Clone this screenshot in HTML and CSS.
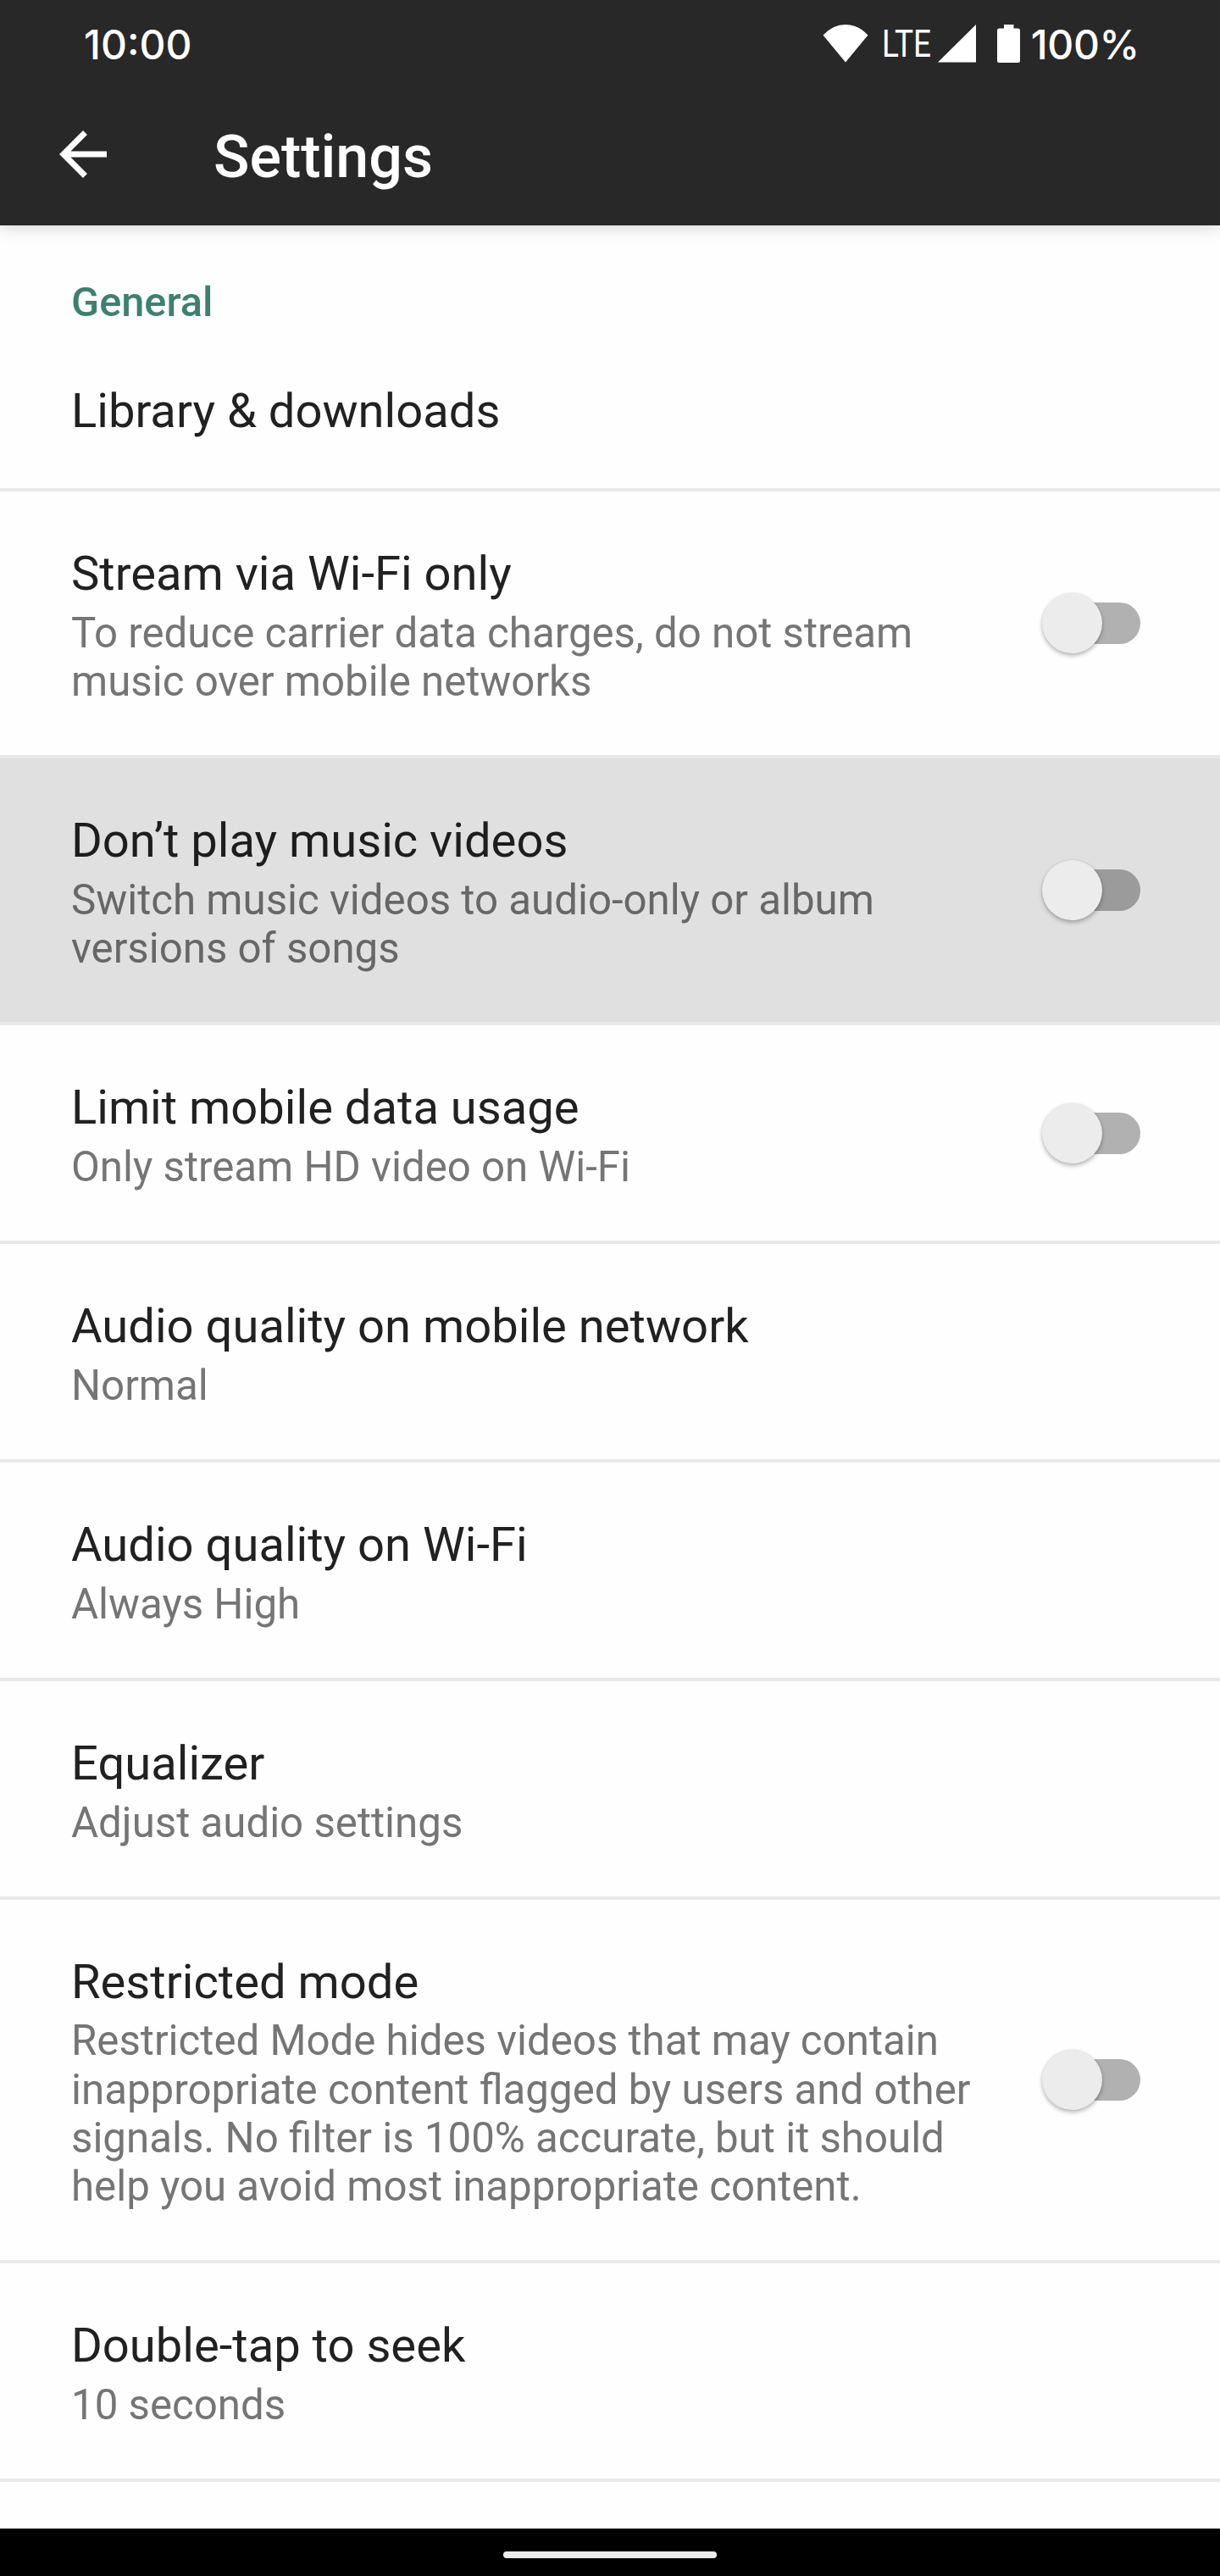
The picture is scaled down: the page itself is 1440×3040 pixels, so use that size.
FILE: index.html
```html
<!DOCTYPE html>
<html lang="en">
<head>
<meta charset="utf-8">
<title>Settings</title>
<link rel="stylesheet" href="styles.css">
</head>
<body>
<div class="screen">
  <header class="header">
    <div class="status-bar">
      <span class="clock">10:00</span>
      <div class="status-icons">
        <svg class="wifi" viewBox="0 0 54 46" aria-hidden="true"><path d="M0.5 13.5Q12 1 27 1T53.500 13.500L27 45.500z"/></svg>
        <svg class="lte" viewBox="0 0 58 46"><text x="-1" y="38.500" textLength="58" lengthAdjust="spacingAndGlyphs">LTE</text></svg>
        <svg class="signal" viewBox="0 0 45 46" aria-hidden="true"><path d="M0 45.500L45 1V45.500z"/></svg>
        <svg class="battery" viewBox="0 0 27 46" aria-hidden="true"><path d="M8 1H19.500V5.500H24.500Q27 5.500 27 8V43.500Q27 46 24.500 46H2.500Q0 46 0 43.500V8Q0 5.500 2.500 5.500H8z"/></svg>
        <span class="percent">100%</span>
      </div>
    </div>
    <div class="app-bar">
      <svg class="back" viewBox="0 0 24 24" aria-label="Back"><path d="M20 11H7.830l5.590-5.590L12 4l-8 8 8 8 1.410-1.410L7.830 13H20v-2z"/></svg>
      <h1 class="app-title">Settings</h1>
    </div>
  </header>

  <main class="list">
    <h2 class="section">General</h2>
    <div class="row">
      <div class="text"><div class="title">Library &amp; downloads</div></div>
    </div>
    <div class="row">
      <div class="text">
        <div class="title">Stream via Wi-Fi only</div>
        <div class="summary">To reduce carrier data charges, do not stream<br>music over mobile networks</div>
      </div>
      <div class="switch"><div class="track"></div><div class="thumb"></div></div>
    </div>
    <div class="row pressed">
      <div class="text">
        <div class="title">Don’t play music videos</div>
        <div class="summary">Switch music videos to audio-only or album<br>versions of songs</div>
      </div>
      <div class="switch"><div class="track"></div><div class="thumb"></div></div>
    </div>
    <div class="row">
      <div class="text">
        <div class="title">Limit mobile data usage</div>
        <div class="summary">Only stream HD video on Wi-Fi</div>
      </div>
      <div class="switch"><div class="track"></div><div class="thumb"></div></div>
    </div>
    <div class="row">
      <div class="text">
        <div class="title">Audio quality on mobile network</div>
        <div class="summary">Normal</div>
      </div>
    </div>
    <div class="row">
      <div class="text">
        <div class="title">Audio quality on Wi-Fi</div>
        <div class="summary">Always High</div>
      </div>
    </div>
    <div class="row">
      <div class="text">
        <div class="title">Equalizer</div>
        <div class="summary">Adjust audio settings</div>
      </div>
    </div>
    <div class="row">
      <div class="text">
        <div class="title">Restricted mode</div>
        <div class="summary">Restricted Mode hides videos that may contain<br>inappropriate content flagged by users and other<br>signals. No filter is 100% accurate, but it should<br>help you avoid most inappropriate content.</div>
      </div>
      <div class="switch"><div class="track"></div><div class="thumb"></div></div>
    </div>
    <div class="row">
      <div class="text">
        <div class="title">Double-tap to seek</div>
        <div class="summary">10 seconds</div>
      </div>
    </div>
  </main>

  <footer class="nav-bar"><div class="pill"></div></footer>
</div>
</body>
</html>
```
FILE: styles.css
```css
* { box-sizing: border-box; }

body {
  margin: 0;
  background: #fefefe;
  font-family: Roboto, "Liberation Sans", sans-serif;
}

.screen {
  width: 1440px;
  height: 3040px;
  display: flex;
  flex-direction: column;
  overflow: hidden;
}

.header {
  position: relative;
  flex: none;
  height: 266px;
  background: #282828;
  color: #fff;
  box-shadow: 0 3px 18px rgba(0, 0, 0, 0.16);
}

.header svg { display: block; flex: none; fill: #fff; }

.status-bar {
  height: 98px;
  padding: 0 95px 0 99px;
  display: flex;
  justify-content: space-between;
}

.clock,
.percent {
  font: 500 48px/58px Inter, Roboto, sans-serif;
  margin-top: 24px;
  white-space: nowrap;
}

.percent { letter-spacing: -0.300px; }

.status-icons { display: flex; align-items: flex-start; }
.status-icons svg { height: 46px; margin-top: 27.500px; }
.wifi { width: 54px; margin-right: 17px; }
.lte { width: 58px; margin-right: 7px; overflow: visible; }
.lte text { font: 400 44px Roboto, sans-serif; }
.signal { width: 45px; margin-right: 25px; }
.battery { width: 27px; margin-right: 13px; }

.app-bar {
  height: 168px;
  padding-left: 56px;
  display: flex;
  align-items: center;
}

.back { width: 84px; height: 84px; }

.app-title {
  margin: 5px 0 0 112px;
  font-size: 70px;
  line-height: 82px;
  font-weight: 500;
}

.list { flex: 1; min-height: 0; overflow: hidden; padding-top: 62px; }

.section {
  margin: 0;
  padding-left: 84px;
  font-size: 48.700px;
  line-height: 57.300px;
  font-weight: 500;
  color: #3e8070;
}

.row {
  display: flex;
  align-items: center;
  justify-content: space-between;
  padding: 64px 94px 58.200px 84px;
  border-bottom: 4px solid #e9e9e9;
}

.section + .row { padding-top: 66.700px; }

.title {
  font-size: 56.150px;
  line-height: 66px;
  color: #212121;
  white-space: nowrap;
}

.summary {
  margin-top: 8.500px;
  font-size: 49.220px;
  line-height: 57.200px;
  color: #757575;
  white-space: nowrap;
}

.pressed { background: #e0e0e0; }
.pressed .title { color: #1d1d1d; }
.pressed .summary { color: #676767; }

.switch {
  flex: none;
  width: 116px;
  height: 71px;
  margin: -26px 0 -20px;
  display: grid;
  align-items: center;
}

.track,
.thumb { grid-area: 1 / 1; }

.track {
  justify-self: end;
  width: 98px;
  height: 49px;
  border-radius: 25px;
  background: #b1b1b1;
}

.pressed .track { background: #9b9b9b; }

.thumb {
  width: 71px;
  height: 71px;
  border-radius: 50%;
  background: #ececec;
  box-shadow: 0 3px 5px rgba(0, 0, 0, 0.26), 0 0 3px rgba(0, 0, 0, 0.1);
}

.nav-bar {
  flex: none;
  height: 56px;
  background: #000;
  display: flex;
  justify-content: center;
  padding-top: 27px;
}

.pill {
  width: 252px;
  height: 8px;
  border-radius: 4px;
  background: #ebebeb;
}
```
